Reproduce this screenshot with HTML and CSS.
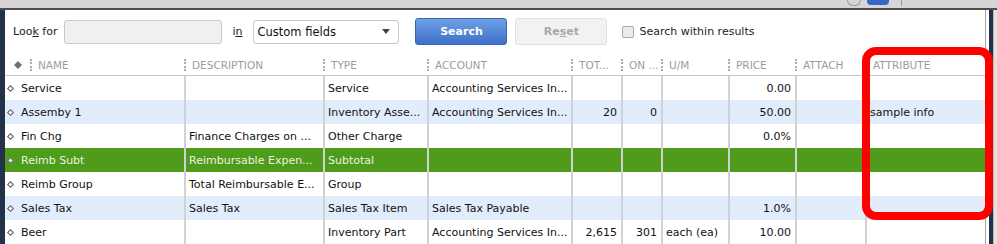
FILE: index.html
```html
<!DOCTYPE html>
<html lang="en">
<head>
    <meta charset="UTF-8">
    <title>Item List</title>
    <link rel="stylesheet" href="styles.css">
</head>
<body>
    <div class="titlebar">
        <span class="tb-circle"></span>
        <span class="tb-pill"></span>
        <span class="tb-tick"></span>
    </div>
    <div class="frame">
        <div class="edge-left"></div>
        <div class="panel">
            <div class="toolbar">
                <span class="lbl">Loo<u>k</u> for</span>
                <input class="look" type="text">
                <span class="lbl in">i<u>n</u></span>
                <div class="select">
                    <span>Custom fields</span>
                    <span class="caret"></span>
                </div>
                <button class="btn btn-search">Search</button>
                <button class="btn btn-reset" disabled>Re<u>s</u>et</button>
                <span class="check"></span>
                <span class="lbl">Search within results</span>
            </div>

            <div class="row head">
                <div class="hc first">
                    <svg class="hdiamond" width="8" height="8" viewBox="0 0 8 8"><polygon points="4,0 8,4 4,8 0,4" fill="#6f6f6f"/></svg>
                    <span class="sep"></span>
                    <span>NAME</span>
                </div>
                <div class="hc"><span class="sep"></span><span>DESCRIPTION</span></div>
                <div class="hc"><span class="sep"></span><span>TYPE</span></div>
                <div class="hc"><span class="sep"></span><span>ACCOUNT</span></div>
                <div class="hc"><span class="sep"></span><span>TOT...</span></div>
                <div class="hc"><span class="sep"></span><span>ON ...</span></div>
                <div class="hc"><span class="sep"></span><span>U/M</span></div>
                <div class="hc"><span class="sep"></span><span>PRICE</span></div>
                <div class="hc"><span class="sep"></span><span>ATTACH</span></div>
                <div class="hc"><span class="sep"></span><span>ATTRIBUTE</span></div>
            </div>

            <div class="row">
                <div class="c name"><i class="dot"></i>Service</div>
                <div class="c"></div>
                <div class="c">Service</div>
                <div class="c">Accounting Services In...</div>
                <div class="c num"></div>
                <div class="c num"></div>
                <div class="c"></div>
                <div class="c num">0.00</div>
                <div class="c"></div>
                <div class="c"></div>
            </div>
            <div class="row alt">
                <div class="c name"><i class="dot"></i>Assemby 1</div>
                <div class="c"></div>
                <div class="c">Inventory Asse...</div>
                <div class="c">Accounting Services In...</div>
                <div class="c num">20</div>
                <div class="c num">0</div>
                <div class="c"></div>
                <div class="c num">50.00</div>
                <div class="c"></div>
                <div class="c">sample info</div>
            </div>
            <div class="row">
                <div class="c name"><i class="dot"></i>Fin Chg</div>
                <div class="c">Finance Charges on ...</div>
                <div class="c">Other Charge</div>
                <div class="c"></div>
                <div class="c num"></div>
                <div class="c num"></div>
                <div class="c"></div>
                <div class="c num">0.0%</div>
                <div class="c"></div>
                <div class="c"></div>
            </div>
            <div class="row sel">
                <div class="c name"><i class="dot"></i>Reimb Subt</div>
                <div class="c">Reimbursable Expen...</div>
                <div class="c">Subtotal</div>
                <div class="c"></div>
                <div class="c num"></div>
                <div class="c num"></div>
                <div class="c"></div>
                <div class="c num"></div>
                <div class="c"></div>
                <div class="c"></div>
            </div>
            <div class="row">
                <div class="c name"><i class="dot"></i>Reimb Group</div>
                <div class="c">Total Reimbursable E...</div>
                <div class="c">Group</div>
                <div class="c"></div>
                <div class="c num"></div>
                <div class="c num"></div>
                <div class="c"></div>
                <div class="c num"></div>
                <div class="c"></div>
                <div class="c"></div>
            </div>
            <div class="row alt">
                <div class="c name"><i class="dot"></i>Sales Tax</div>
                <div class="c">Sales Tax</div>
                <div class="c">Sales Tax Item</div>
                <div class="c">Sales Tax Payable</div>
                <div class="c num"></div>
                <div class="c num"></div>
                <div class="c"></div>
                <div class="c num">1.0%</div>
                <div class="c"></div>
                <div class="c"></div>
            </div>
            <div class="row">
                <div class="c name"><i class="dot"></i>Beer</div>
                <div class="c"></div>
                <div class="c">Inventory Part</div>
                <div class="c">Accounting Services In...</div>
                <div class="c num">2,615</div>
                <div class="c num">301</div>
                <div class="c">each (ea)</div>
                <div class="c num">10.00</div>
                <div class="c"></div>
                <div class="c"></div>
            </div>
        </div>
        <div class="edge-right">
            <span class="er-line"></span>
            <span class="er-gap"></span>
            <span class="er-dark"></span>
            <span class="er-light"></span>
        </div>
    </div>
    <div class="callout"></div>
</body>
</html>
```

FILE: styles.css
```css
* {
    box-sizing: border-box;
}

body {
    margin: 0;
    width: 997px;
    height: 244px;
    overflow: hidden;
    position: relative;
    background: #fff;
    font-family: "DejaVu Sans", Tahoma, sans-serif;
    font-size: 11px;
    color: #111;
}

/* window title strip, mostly cut off */
.titlebar {
    height: 10px;
    background: #d6d6d6;
    border-bottom: 2px solid #4d4d4d;
    display: flex;
    justify-content: flex-end;
    align-items: flex-start;
    padding-right: 95px;
}

.tb-circle {
    width: 14px;
    height: 6px;
    border: 1px solid #9a9a9a;
    border-top: none;
    border-radius: 0 0 7px 7px;
}

.tb-pill {
    width: 22px;
    height: 5px;
    margin-left: 6px;
    background: #3766c9;
    border-radius: 0 0 4px 4px;
}

.tb-tick {
    width: 1px;
    height: 6px;
    margin-left: 12px;
    background: #9a9a9a;
}

.frame {
    display: flex;
    height: 234px;
}

.edge-left {
    width: 5px;
    background: #23324a;
}

.panel {
    width: 980px;
}

.edge-right {
    display: flex;
}

.er-line {
    width: 1px;
    background: #a3a3a3;
}

.er-gap {
    width: 3px;
    background: #fff;
}

.er-dark {
    width: 4px;
    background: #22314a;
}

.er-light {
    width: 4px;
    background: #e2e2e2;
    border-left: 1px solid #b8b8b8;
}

/* search toolbar */
.toolbar {
    height: 45px;
    display: flex;
    align-items: center;
    padding: 0 0 2px 8px;
    font-size: 11px;
}

.lbl {
    color: #1c1c1c;
}

.lbl u {
    text-decoration-thickness: 1px;
}

.look {
    width: 158px;
    height: 24px;
    margin-left: 7px;
    background: #f0f0f0;
    border: 1px solid #c9c9c9;
    border-radius: 3px;
}

.in {
    margin-left: 10px;
}

.select {
    width: 146px;
    height: 24px;
    margin-left: 11px;
    border: 1px solid #c9c9c9;
    border-radius: 3px;
    display: flex;
    align-items: center;
    justify-content: space-between;
    padding: 0 8px 0 3px;
    font-size: 11.5px;
}

.caret {
    width: 0;
    height: 0;
    border-left: 4px solid transparent;
    border-right: 4px solid transparent;
    border-top: 5px solid #444;
}

.btn {
    width: 92px;
    height: 27px;
    border-radius: 3px;
    font-family: "DejaVu Sans", Tahoma, sans-serif;
    font-size: 11px;
    font-weight: bold;
}

.btn-search {
    margin-left: 16px;
    color: #fff;
    background: linear-gradient(#6fa1e6, #3f70c9);
    border: 1px solid #3a64b3;
}

.btn-reset {
    margin-left: 8px;
    color: #a9a9a9;
    background: #f2f2f2;
    border: 1px solid #e0e0e0;
}

.check {
    width: 12px;
    height: 12px;
    margin: 0 5px 0 15px;
    background: #ececec;
    border: 1px solid #a9a9a9;
    border-radius: 2px;
}

/* item grid */
.row {
    display: grid;
    grid-template-columns: 179px 139px 104px 144px 50px 40px 67px 67px 70px 120px;
    height: 24px;
}

.row.alt {
    background: #e2edfb;
}

.row.sel {
    background: #4f9b1c;
    color: #e9f4df;
}

.c {
    display: flex;
    align-items: center;
    padding-left: 3px;
    white-space: nowrap;
    overflow: hidden;
    border-left: 2px solid #d2d2d2;
}

.c.name {
    border-left: none;
    padding-left: 3px;
}

.c.num {
    justify-content: flex-end;
    padding-right: 4px;
}

.dot {
    width: 5px;
    height: 5px;
    margin-right: 8px;
    border: 1px solid #5a5a5a;
    background: #fff;
    transform: rotate(45deg);
}

.row.head {
    height: 21px;
    border-bottom: 1px solid #c9c9c9;
    color: #9c9c9c;
    font-size: 10.5px;
}

.hc {
    display: flex;
    align-items: center;
    white-space: nowrap;
}

.hc.first {
    padding-left: 9px;
}

.hdiamond {
    margin-right: 8px;
}

.sep {
    width: 2px;
    height: 12px;
    margin-right: 6px;
    border-left: 2px dotted #a9a9a9;
}

/* red highlight drawn over the attribute column */
.callout {
    position: absolute;
    left: 862px;
    top: 47px;
    width: 131px;
    height: 173px;
    border: 8px solid #ff0000;
    border-radius: 14px;
}
```
